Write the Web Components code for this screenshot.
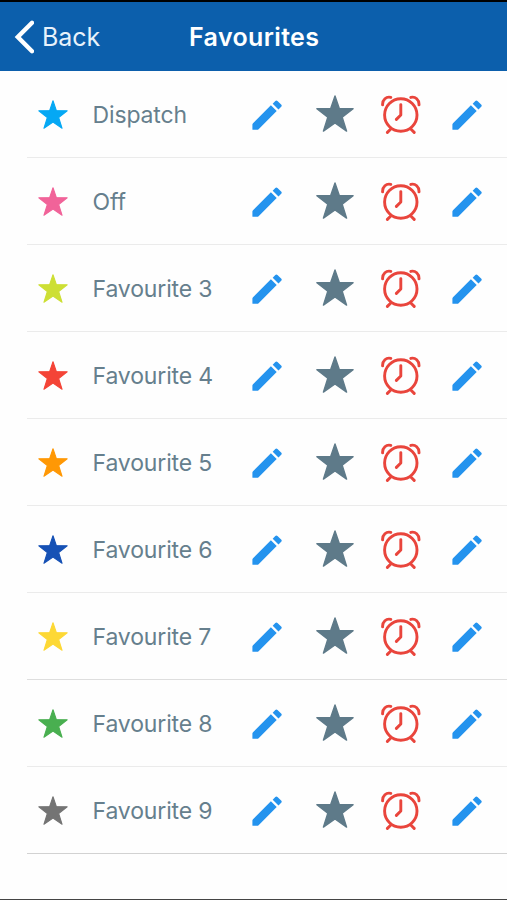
<!DOCTYPE html>
<html lang="en">
<head>
<meta charset="utf-8">
<title>Favourites</title>
<style>
html,body{margin:0;height:100%;background:#fefefe}
body{font-family:Inter,"Liberation Sans",sans-serif;overflow:hidden}
</style>
</head>
<body>
<favourites-screen></favourites-screen>
<script>
const define=(name,html,setup)=>customElements.define(name,class extends HTMLElement{
  constructor(){super();this.attachShadow({mode:'open'}).innerHTML=html;}
  connectedCallback(){if(setup)setup(this);}
});
define('icon-star',`<style>:host{display:block;width:38px;height:37px}svg{display:block;width:100%;height:100%}</style>
<svg viewBox="0 0 38 37"><path d="M19 .9 23.3 13.5 37.1 13.7 26.2 22.3 30.6 36.1 19 28 7.4 36.1 11.8 22.3 .9 13.7 14.7 13.5Z" fill="currentColor" stroke="currentColor" stroke-width="1.4" stroke-linejoin="round"/></svg>`);
define('icon-pencil',`<style>:host{display:block;width:30px;height:30px;color:#2493ee}svg{display:block;width:100%;height:100%}</style>
<svg viewBox="0 0 30 30"><path fill="currentColor" d="M.4 24.6Q.4 23.8 1 23.2L18.9 5.3 24.7 11.1 6.6 29.2Q6 29.8 5.2 29.8H1Q.4 29.8 .4 29.2ZM20.7 3.7 23.3 1Q24.4-.1 25.5 1L29.1 4.5Q30.3 5.7 29.2 6.8L26.5 9.5Z"/></svg>`);
define('icon-alarm',`<style>:host{display:block;width:40px;height:40px;color:#e9453c}svg{display:block;width:100%;height:100%}</style>
<svg viewBox="0 0 40 40" fill="none" stroke="currentColor" stroke-width="2.9" stroke-linecap="round" stroke-linejoin="round"><circle cx="19.8" cy="20" r="16.2"/><path d="M19.8 9.6V20L15.4 24.4M9.8 34 6.4 37.4M29.8 34 33.2 37.4M1.6 9.9C1.3 4.8 5.3 1.2 9.8 2.4M38 9.9C38.3 4.8 34.3 1.2 29.8 2.4"/></svg>`);
define('icon-chevron',`<style>:host{display:block;width:20px;height:34px}svg{display:block}</style>
<svg width="20" height="34" viewBox="0 0 20 34"><path d="M18 2.8 3.8 17 18 31.2" fill="none" stroke="#fff" stroke-width="4.4" stroke-linecap="round" stroke-linejoin="miter"/></svg>`);
define('nav-bar',`<style>
:host{box-sizing:border-box;display:grid;grid-template-columns:189px 1fr;align-items:center;height:71px;border-top:2px solid #000;background:#0c5fac;color:#fff;white-space:nowrap}
.back{display:flex;align-items:center;gap:8px;padding-left:14px;font-size:25px;line-height:34px;letter-spacing:-.05px;color:#e8f2fb}
.title{font-size:25px;line-height:34px;font-weight:600;letter-spacing:.36px}
</style><div class="back"><icon-chevron></icon-chevron><slot name="back"></slot></div><div class="title"><slot></slot></div>`);
define('favourite-row',`<style>
:host{box-sizing:border-box;display:grid;grid-template-columns:55px 159px 64px 65px 71px 30px;align-items:center;height:87px;margin-left:26.5px;padding:2px 0 0 11px;border-bottom:1.5px solid var(--line,#ebebeb);color:#667f8d}
.mark{width:30px;height:29px;color:var(--mark);margin-bottom:2px}
.label{font-size:23px;line-height:30px;letter-spacing:-.14px;white-space:nowrap}
.big{color:#5e7a89;margin-bottom:3px}
</style><icon-star class="mark"></icon-star><span class="label"><slot></slot></span><icon-pencil></icon-pencil><icon-star class="big"></icon-star><icon-alarm></icon-alarm><icon-pencil></icon-pencil>`,
el=>{el.style.setProperty('--mark',el.getAttribute('color'));if(el.hasAttribute('line'))el.style.setProperty('--line',el.getAttribute('line'));});
define('favourites-screen',`<style>:host{box-sizing:border-box;display:flex;flex-direction:column;height:900px;border-bottom:1px solid #444;background:#fefefe}</style>
<nav-bar><span slot="back">Back</span>Favourites</nav-bar>
<main>
<favourite-row color="#05a8f4">Dispatch</favourite-row>
<favourite-row color="#f16399">Off</favourite-row>
<favourite-row color="#cddf35">Favourite 3</favourite-row>
<favourite-row color="#f44437">Favourite 4</favourite-row>
<favourite-row color="#ff9805">Favourite 5</favourite-row>
<favourite-row color="#1651b5">Favourite 6</favourite-row>
<favourite-row color="#fdd835" line="#dedede">Favourite 7</favourite-row>
<favourite-row color="#49af50">Favourite 8</favourite-row>
<favourite-row color="#747474" line="#d2d2d2">Favourite 9</favourite-row>
</main>`);
</script>
</body>
</html>
